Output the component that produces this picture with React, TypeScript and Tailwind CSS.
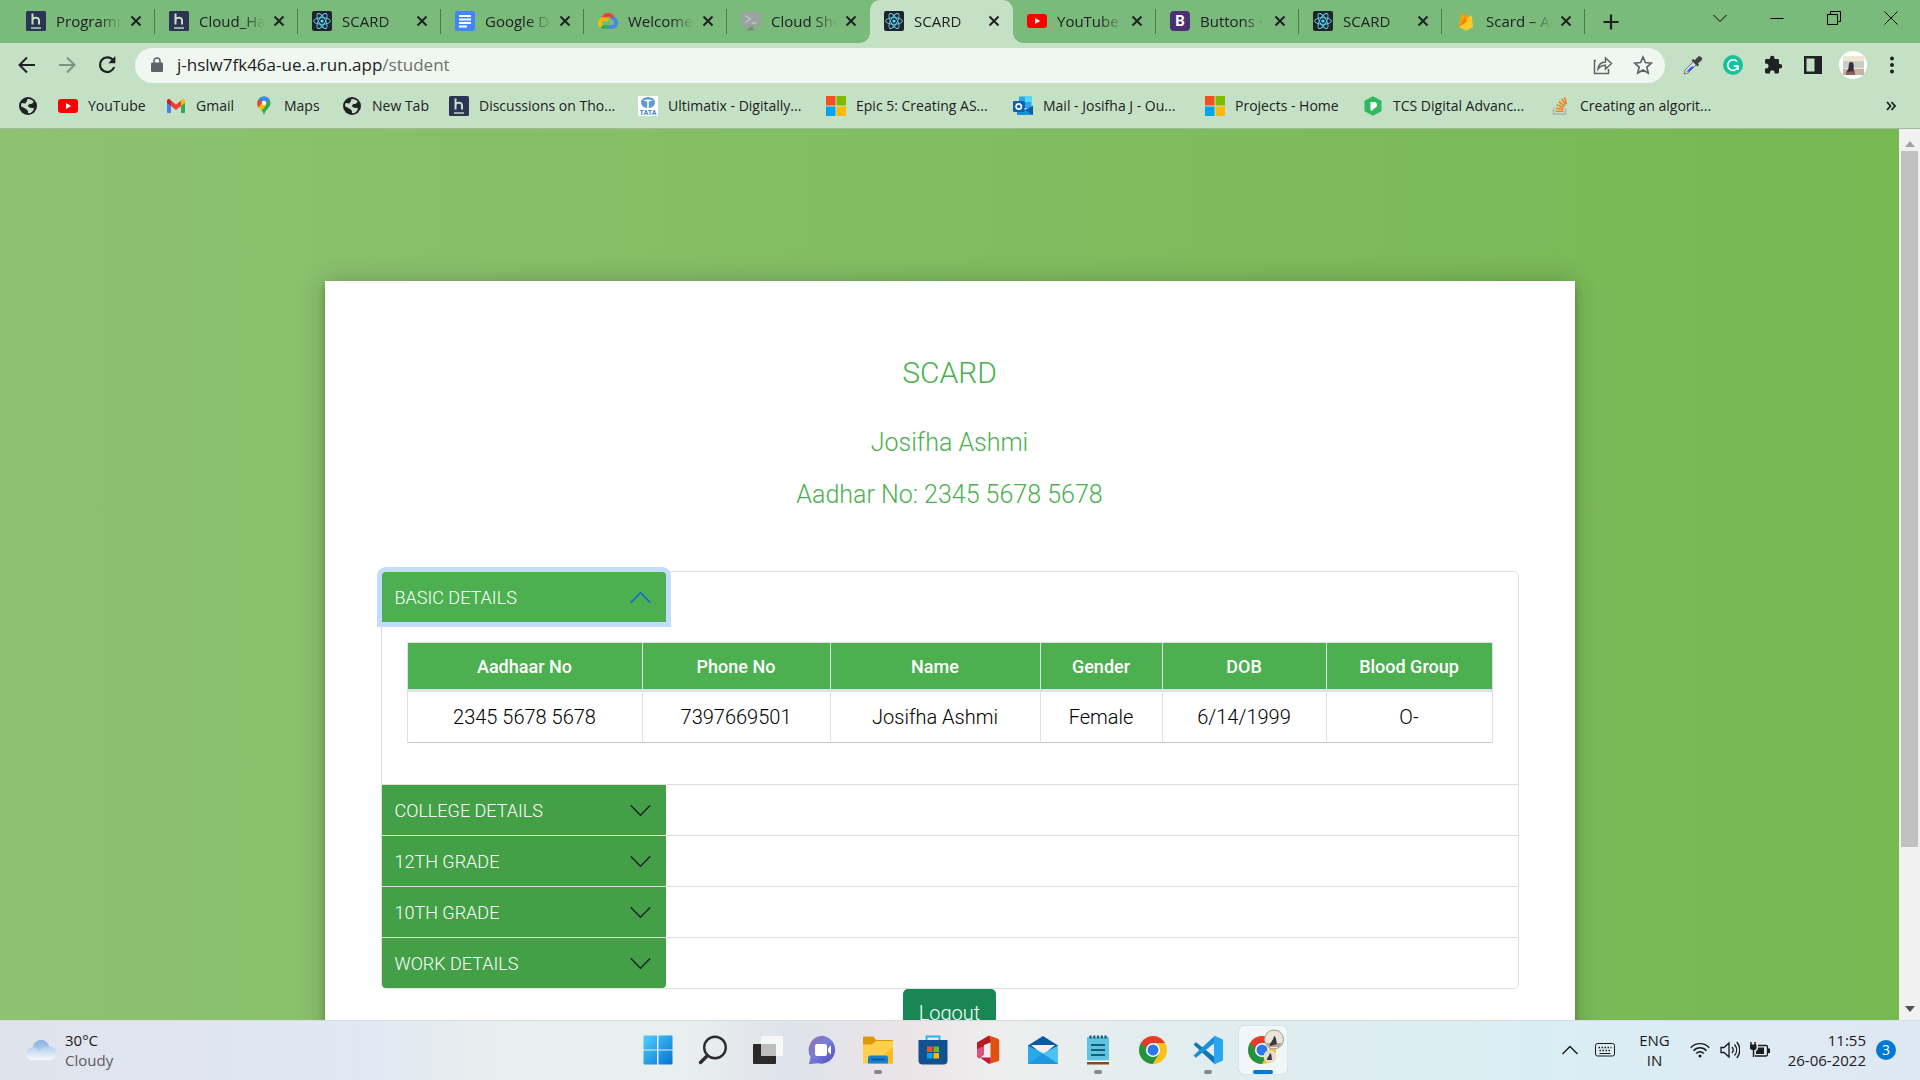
import { useState } from "react";
import type { ComponentType, ReactNode } from "react";

type IconType = ComponentType;

/* ---------- Favicons ---------- */

function HackerEarthIcon() {
  return (
    <svg viewBox="0 0 20 20" className="size-5">
      <rect width="20" height="20" rx="1.5" fill="#2c3454" />
      <path d="M6.5 2.5v11M6.5 8.6c.6-2 6.5-3 6.5.6v4.3" fill="none" stroke="#c5e1c5" strokeWidth="2" />
      <path d="M5 17h10" stroke="#c5e1c5" strokeWidth="1.4" />
    </svg>
  );
}

function ReactIcon() {
  return (
    <svg viewBox="0 0 20 20" className="size-5">
      <rect width="20" height="20" rx="2" fill="#20232a" />
      <g fill="none" stroke="#61dafb" strokeWidth="0.9">
        <ellipse cx="10" cy="10" rx="8.4" ry="3.3" />
        <ellipse cx="10" cy="10" rx="8.4" ry="3.3" transform="rotate(60 10 10)" />
        <ellipse cx="10" cy="10" rx="8.4" ry="3.3" transform="rotate(120 10 10)" />
      </g>
      <circle cx="10" cy="10" r="1.6" fill="#61dafb" />
    </svg>
  );
}

function DocsIcon() {
  return (
    <svg viewBox="0 0 20 20" className="size-5">
      <rect width="20" height="20" rx="2" fill="#4285f4" />
      <path d="M4 5h12M4 8.5h12M4 12h12M4 15.5h8" stroke="#fff" strokeWidth="1.8" />
    </svg>
  );
}

function GoogleCloudIcon() {
  return (
    <svg viewBox="0 0 20 20" className="size-5">
      <g fill="none" strokeWidth="3.6">
        <path d="M5 7.8C6 4.8 8.2 3.8 10.2 3.8c2.2 0 4.2 1.3 5 3.8" stroke="#ea4335" />
        <path d="M14.6 6.8c1.6 1 3.6 2.4 3.6 5 0 2.7-2 4.2-4.2 4.2h-4" stroke="#4285f4" />
        <path d="M10.2 16H5.6c-.8 0-1.6-.3-2.2-.8" stroke="#34a853" />
        <path d="M3.6 15.4c-2.4-2-2.2-6.4 1.6-7.3 2-.4 3.4.4 4.2 1.8" stroke="#fbbc05" />
      </g>
    </svg>
  );
}

function CloudShellIcon() {
  return (
    <svg viewBox="0 0 20 20" className="size-5">
      <rect y="1" width="20" height="14.5" rx="1" fill="#9aa39f" />
      <path d="M4.5 4.5l5 3.5-5 3.5M10.5 12h5" fill="none" stroke="#b9c6bd" strokeWidth="1.5" />
      <path d="M8 15.5h4V18h2v1.5H6V18h2z" fill="#7f8a85" />
    </svg>
  );
}

function YouTubeIcon() {
  return (
    <svg viewBox="0 0 20 20" className="size-5">
      <rect y="3" width="20" height="14" rx="3" fill="#f00" />
      <path d="M8 7l5.2 3L8 13z" fill="#fff" />
    </svg>
  );
}

function BootstrapIcon() {
  return (
    <svg viewBox="0 0 20 20" className="size-5">
      <rect width="20" height="20" rx="4" fill="#4c2f74" />
      <text x="10" y="15.4" textAnchor="middle" fontSize="15" fontWeight="700" fontFamily="Roboto, sans-serif" fill="#fff">
        B
      </text>
    </svg>
  );
}

function FirebaseIcon() {
  return (
    <svg viewBox="0 0 20 20" className="size-5">
      <path d="M3 16L5.4 1.6c.1-.5.7-.6.9-.2L9 6.2 10.2 4c.2-.4.7-.4.9 0L17 16z" fill="#ffa000" />
      <path d="M3 16L11 7.2 14.7 4.4c.4-.4.9-.1 1 .3L17 16l-6.2 3.3c-.5.3-1.1.3-1.6 0z" fill="#ffca28" />
      <path d="M3 16L9 6.2l2 4z" fill="#f57c00" />
    </svg>
  );
}

function GlobeIcon() {
  return (
    <svg viewBox="0 0 20 20" className="size-5">
      <circle cx="10" cy="10" r="9" fill="#202124" />
      <path d="M9.5 3c2-.5 4.8.6 6.2 2.6l-1.6 2.2-2.7.3-1.7 1.9 2.2 1.7 3.9.2c.4 1.7-1.4 4-3.2 5l-2.5.4-.3-2.7-2.5-2.2L3 10.2c0-1.3.2-2.2.7-3.2l3.7.6 1.3-2z" fill="#c5e1c5" />
    </svg>
  );
}

function GmailIcon() {
  return (
    <svg viewBox="0 0 20 20" className="size-5">
      <path d="M1 5.5V16c0 .6.4 1 1 1h3V8z" fill="#4285f4" />
      <path d="M19 5.5V16c0 .6-.4 1-1 1h-3V8z" fill="#34a853" />
      <path d="M5 4.5l5 4 5-4V10l-5 4-5-4z" fill="#ea4335" />
      <path d="M1 5c0-2 2-2.3 3-1.5l1 1V10L1 6.8z" fill="#c5221f" />
      <path d="M19 5c0-2-2-2.3-3-1.5l-1 1V10l4-3.2z" fill="#fbbc04" />
    </svg>
  );
}

function MapsIcon() {
  return (
    <svg viewBox="0 0 20 20" className="size-5">
      <path d="M10 .5C6 .5 3.5 3.6 3.5 7c0 5 5.3 6.2 6.5 12.5C11.2 13.2 16.5 12 16.5 7c0-3.4-2.5-6.5-6.5-6.5z" fill="#34a853" />
      <path d="M4.2 10.3l5-5.8L12 9.5l-4.6 5.2c-1.2-1.7-2.5-2.7-3.2-4.4z" fill="#fbbc04" />
      <path d="M5 3l4 3.3-5 5.5C3 9 3 5.5 5 3z" fill="#ea4335" />
      <path d="M5 3c2.2-3.2 8-3.4 10.3.3L10 9 7.5 5z" fill="#4285f4" />
      <circle cx="10" cy="7" r="2.3" fill="#fff" />
    </svg>
  );
}

function TataIcon() {
  return (
    <svg viewBox="0 0 20 20" className="size-5">
      <rect width="20" height="20" fill="#fff" />
      <ellipse cx="10" cy="6.5" rx="7" ry="5.5" fill="#5b9bd5" />
      <path d="M9.2 12V5.5L5 4.5c3-1.5 7-1.5 10 0l-4.2 1V12z" fill="#fff" />
      <text x="10" y="19" textAnchor="middle" fontSize="7" fontWeight="700" fontFamily="Roboto, sans-serif" fill="#3d85c6">
        TATA
      </text>
    </svg>
  );
}

function MicrosoftIcon() {
  return (
    <svg viewBox="0 0 20 20" className="size-5">
      <path d="M0 0h9.5v9.5H0z" fill="#f25022" />
      <path d="M10.5 0H20v9.5h-9.5z" fill="#7fba00" />
      <path d="M0 10.5h9.5V20H0z" fill="#00a4ef" />
      <path d="M10.5 10.5H20V20h-9.5z" fill="#ffb900" />
    </svg>
  );
}

function OutlookIcon() {
  return (
    <svg viewBox="0 0 20 20" className="size-5">
      <path d="M6 .5h12.5V12H6z" fill="#28a8ea" />
      <path d="M12 .5h6.5V6H12z" fill="#50d9ff" />
      <path d="M6 6h6v6H6z" fill="#0364b8" />
      <path d="M4 19V10l8 4 8-4.5V19z" fill="#1490df" />
      <path d="M20 10v9l-8-5z" fill="#0a5ea8" />
      <rect y="5" width="11.5" height="11" rx="1" fill="#0f5fb0" />
      <circle cx="5.7" cy="10.5" r="2.7" fill="none" stroke="#fff" strokeWidth="1.7" />
    </svg>
  );
}

function TcsIcon() {
  return (
    <svg viewBox="0 0 20 20" className="size-5">
      <path d="M10 .3l8.5 4.5v10.4L10 19.7l-8.5-4.5V4.8z" fill="#2dba5e" />
      <path d="M7.5 6h3.8c3.6 0 3.7 5.8 0 6.2l-2 2.3H7.5z" fill="#fff" />
    </svg>
  );
}

function StackOverflowIcon() {
  return (
    <svg viewBox="0 0 20 20" className="size-5">
      <path d="M3.5 12.5V18h12v-5.5" fill="none" stroke="#a9b3ad" strokeWidth="1.5" />
      <path
        d="M5.5 15.3h8M5.7 12.2l7.8 1.1M6.6 8.8l7.2 2.9M8.7 5.5l5.9 4.7M11.5 2.7l4.2 6M14.6 1.2l1.8 6.8"
        stroke="#f48024"
        strokeWidth="1.6"
      />
    </svg>
  );
}

/* ---------- Browser chrome ---------- */

const tabs: { title: string; icon: IconType; active?: boolean }[] = [
  { title: "Programming", icon: HackerEarthIcon },
  { title: "Cloud_Hack", icon: HackerEarthIcon },
  { title: "SCARD", icon: ReactIcon },
  { title: "Google Docs", icon: DocsIcon },
  { title: "Welcome to", icon: GoogleCloudIcon },
  { title: "Cloud Shell", icon: CloudShellIcon },
  { title: "SCARD", icon: ReactIcon, active: true },
  { title: "YouTube", icon: YouTubeIcon },
  { title: "Buttons · Bo", icon: BootstrapIcon },
  { title: "SCARD", icon: ReactIcon },
  { title: "Scard – Aut", icon: FirebaseIcon },
];

const bookmarks: { label: string; icon: IconType; width: string }[] = [
  { label: "YouTube", icon: YouTubeIcon, width: "w-[108px]" },
  { label: "Gmail", icon: GmailIcon, width: "w-[88px]" },
  { label: "Maps", icon: MapsIcon, width: "w-[88px]" },
  { label: "New Tab", icon: GlobeIcon, width: "w-[107px]" },
  { label: "Discussions on Tho...", icon: HackerEarthIcon, width: "w-[189px]" },
  { label: "Ultimatix - Digitally...", icon: TataIcon, width: "w-[188px]" },
  { label: "Epic 5: Creating AS...", icon: MicrosoftIcon, width: "w-[187px]" },
  { label: "Mail - Josifha J - Ou...", icon: OutlookIcon, width: "w-[192px]" },
  { label: "Projects - Home", icon: MicrosoftIcon, width: "w-[158px]" },
  { label: "TCS Digital Advanc...", icon: TcsIcon, width: "w-[187px]" },
  { label: "Creating an algorit...", icon: StackOverflowIcon, width: "w-[188px]" },
];

function Tab({ title, icon: Icon, active }: { title: string; icon: IconType; active?: boolean }) {
  return (
    <div
      className={`relative flex h-full w-[143px] min-w-0 items-center pb-0.5 pl-3.5 ${
        active ? "rounded-t-[10px] bg-[#c5e1c5]" : ""
      }`}
    >
      {active && (
        <>
          <span className="absolute bottom-0 -left-2.5 size-2.5 bg-[radial-gradient(circle_at_0_0,#7aba7b_9.5px,#c5e1c5_10px)]" />
          <span className="absolute bottom-0 -right-2.5 size-2.5 bg-[radial-gradient(circle_at_100%_0,#7aba7b_9.5px,#c5e1c5_10px)]" />
        </>
      )}
      <Icon />
      <span className="ml-2.5 w-[66px] overflow-hidden whitespace-nowrap text-[15px] leading-5 text-[#202124] mask-r-from-65%">
        {title}
      </span>
      <button aria-label="Close tab" className="ml-1 p-1">
        <svg viewBox="0 0 12 12" className="size-3">
          <path d="M1.5 1.5l9 9M10.5 1.5l-9 9" stroke="#202124" strokeWidth="2" />
        </svg>
      </button>
    </div>
  );
}

function WindowButton({ label, children }: { label: string; children: ReactNode }) {
  return (
    <button aria-label={label} className="flex w-[57px] items-center justify-center">
      <svg viewBox="0 0 16 16" className="size-4" fill="none" stroke="currentColor">
        {children}
      </svg>
    </button>
  );
}

function TabStrip() {
  return (
    <div className="flex h-[43px] items-center bg-[#7aba7b] pl-3">
      {tabs.map((tab, i) => (
        <div key={i} className="flex h-full items-center">
          <Tab {...tab} />
          {!tab.active && !tabs[i + 1]?.active && <span className="-ml-px h-[25px] w-px bg-[#4b7a50]" />}
        </div>
      ))}
      <button aria-label="New tab" className="ml-3.5 p-1">
        <svg viewBox="0 0 16 16" className="size-4">
          <path d="M8 .5v15M.5 8h15" stroke="#202124" strokeWidth="2.2" />
        </svg>
      </button>
      <div className="ml-auto flex h-full pr-px pb-2 text-black">
        <WindowButton label="Search tabs">
          <path d="M1.5 5l6.5 6.5L14.5 5" />
        </WindowButton>
        <WindowButton label="Minimize">
          <path d="M1.5 8.5h13" />
        </WindowButton>
        <WindowButton label="Restore">
          <path d="M1.5 4.5h10v10h-10zM4.5 4.5v-3h10v10h-3" />
        </WindowButton>
        <WindowButton label="Close">
          <path d="M1.5 1.5l13 13M14.5 1.5l-13 13" />
        </WindowButton>
      </div>
    </div>
  );
}

function Avatar() {
  return (
    <svg viewBox="0 0 28 28" className="size-7">
      <circle cx="14" cy="14" r="14" fill="#fff" />
      <rect x="4" y="5" width="21" height="19" fill="#efe6d4" />
      <path d="M4 10h21v7H4z" fill="#c9cfc2" />
      <path d="M4 18h21v6H4z" fill="#c4b2a3" />
      <path d="M12 11c3 0 3 3 2.5 6l1 6H7c-1-2 2-3 2.5-6s0-6 2.5-6z" fill="#34303c" />
      <path d="M7 21l9-1v4H7z" fill="#8a5f5c" />
    </svg>
  );
}

function Toolbar() {
  return (
    <div className="flex h-10 items-center pt-1 pl-[17px] pr-[15px]">
      <button aria-label="Back" className="mr-5 size-5">
        <svg viewBox="0 0 20 20" fill="none" stroke="#202124" strokeWidth="2">
          <path d="M18 10H3M10 2.5L2.5 10l7.5 7.5" />
        </svg>
      </button>
      <button aria-label="Forward" className="mr-5 size-5">
        <svg viewBox="0 0 20 20" fill="none" stroke="#7d957e" strokeWidth="2">
          <path d="M2 10h15M10 2.5l7.5 7.5-7.5 7.5" />
        </svg>
      </button>
      <button aria-label="Reload" className="size-5">
        <svg viewBox="0 0 20 20" fill="none" stroke="#202124" strokeWidth="2.2">
          <path d="M16 5.2A7.3 7.3 0 1 0 17.2 12" />
          <path d="M18.4 1v7.2h-7.2z" fill="#202124" stroke="none" />
        </svg>
      </button>
      <div className="ml-[18px] mr-3.5 flex h-[35px] flex-1 items-center rounded-full bg-[#f0f7f0] pl-4 pr-3">
        <svg viewBox="0 0 12 16" className="h-4 w-3">
          <rect y="5.5" width="12" height="9.5" rx="1.2" fill="#5f6368" />
          <path d="M3 6V4a3 3 0 0 1 6 0v2" fill="none" stroke="#5f6368" strokeWidth="1.5" />
        </svg>
        <label className="ml-3.5 flex h-full flex-1 items-center text-[17px] text-[#202124]">
          j-hslw7fk46a-ue.a.run.app
          <input
            readOnly
            value="/student"
            className="min-w-0 flex-1 bg-transparent text-[#6b716e] outline-none"
          />
        </label>
        <button aria-label="Share" className="mr-5 size-5">
          <svg viewBox="0 0 20 20" fill="none" stroke="#5f6368" strokeWidth="1.5">
            <path d="M3 5.5H1.5v13h14V14" />
            <path d="M5 14c.5-4.5 3-6.8 7.5-7V3l6 5.5-6 5.5v-3.8C9 10.2 7 11.2 5 14z" />
          </svg>
        </button>
        <button aria-label="Bookmark this page" className="size-5">
          <svg viewBox="0 0 20 20" fill="none" stroke="#5f6368" strokeWidth="1.7">
            <path d="M10 2l2.4 5.5 6 .6-4.5 4 1.3 5.9-5.2-3.1L4.8 18l1.3-5.9-4.5-4 6-.6z" />
          </svg>
        </button>
      </div>
      <div className="flex items-center">
        <button aria-label="Color picker" className="flex w-10 justify-center pr-3">
          <svg viewBox="0 0 20 20" className="size-5">
            <path d="M1 19l1-4 8.5-8.5 3 3L5 18z" fill="#cfe0f5" stroke="#777" />
            <path d="M3.5 16.5l5-5 3 .2-5.5 5z" fill="#3559e0" />
            <path d="M8.5 5.5l6 6 1.5-1.5-1-1.5 3.8-3.3c1.5-2-1.8-5-3.8-3.5L12 5l-1.8-1z" fill="#444" />
          </svg>
        </button>
        <button aria-label="Grammarly" className="flex w-10 justify-center pr-3">
          <svg viewBox="0 0 20 20" className="size-5">
            <circle cx="10" cy="10" r="10" fill="#15c39a" />
            <path d="M14 6.5A5.3 5.3 0 1 0 15 12M10.8 11.2H15V15" fill="none" stroke="#fff" strokeWidth="1.7" />
          </svg>
        </button>
        <button aria-label="Extensions" className="flex w-10 justify-center pr-3">
          <svg viewBox="0 0 20 20" className="size-5">
            <path d="M17 9h-1V5.5C16 4.5 15.5 4 14.5 4H11.5V3a2.2 2.2 0 0 0-4.5 0v1H3.5C2.5 4 2 4.5 2 5.5v3h1a2.5 2.5 0 0 1 0 5H2v3.500c0 .8.5 1.5 1.5 1.5H7v-1a2.3 2.3 0 0 1 4.6 0v1h3c.9 0 1.4-.7 1.4-1.5v-3.5h1A2.2 2.2 0 0 0 17 9z" fill="#202124" />
          </svg>
        </button>
        <button aria-label="Side panel" className="flex w-10 justify-center pr-3">
          <svg viewBox="0 0 20 20" className="size-5">
            <path d="M1 1h18v18H1zM3.5 3.5v13h8v-13z" fill="#202124" fillRule="evenodd" />
          </svg>
        </button>
        <button aria-label="Profile" className="flex w-10 justify-center pr-3">
          <Avatar />
        </button>
        <button aria-label="Menu" className="flex w-[26px] justify-center">
          <svg viewBox="0 0 20 20" className="size-5" fill="#202124">
            <circle cx="10" cy="3.5" r="2" />
            <circle cx="10" cy="10" r="2" />
            <circle cx="10" cy="16.5" r="2" />
          </svg>
        </button>
      </div>
    </div>
  );
}

function BookmarksBar() {
  return (
    <nav className="flex h-[46px] items-center border-b border-[#a3b8a3] pl-[18px] pr-6 text-[14px] text-[#202124]">
      <a href="#" aria-label="Apps" className="mr-5">
        <GlobeIcon />
      </a>
      {bookmarks.map(({ label, icon: Icon, width }, i) => (
        <a key={i} href="#" className={`flex shrink-0 items-center gap-2.5 whitespace-nowrap ${width}`}>
          <Icon />
          {label}
        </a>
      ))}
      <button aria-label="More bookmarks" className="ml-auto">
        <svg viewBox="0 0 10 10" className="size-2.5" fill="none" stroke="#202124" strokeWidth="1.8">
          <path d="M1 1l3.5 4L1 9M5.5 1L9 5 5.5 9" />
        </svg>
      </button>
    </nav>
  );
}

/* ---------- Student page ---------- */

const details = [
  { label: "Aadhaar No", value: "2345 5678 5678", width: "w-[235px]" },
  { label: "Phone No", value: "7397669501", width: "w-[188px]" },
  { label: "Name", value: "Josifha Ashmi", width: "w-[210px]" },
  { label: "Gender", value: "Female", width: "w-[122px]" },
  { label: "DOB", value: "6/14/1999", width: "w-[164px]" },
  { label: "Blood Group", value: "O-", width: "w-[166px]" },
];

const sections = ["BASIC DETAILS", "COLLEGE DETAILS", "12TH GRADE", "10TH GRADE", "WORK DETAILS"];

function DetailsTable() {
  return (
    <table className="w-full table-fixed border-collapse border border-[#dee2e6] text-center">
      <thead>
        <tr className="h-12 border-b-3 border-[#dee2e6] bg-[#4caf50] text-[18px] text-white">
          {details.map((item) => (
            <th key={item.label} className={`border-x border-[#dee2e6] font-medium ${item.width}`}>
              {item.label}
            </th>
          ))}
        </tr>
      </thead>
      <tbody>
        <tr className="h-[52px] border-b border-[#bccfc8] text-[20px] text-black">
          {details.map((item) => (
            <td key={item.label} className="border-x border-[#dee2e6]">
              {item.value}
            </td>
          ))}
        </tr>
      </tbody>
    </table>
  );
}

function Accordion() {
  const [open, setOpen] = useState<number | null>(0);

  return (
    <div className="divide-y divide-[#dfdfdf] rounded-[5px] border border-[#dfdfdf]">
      {sections.map((section, i) => {
        const isOpen = open === i;
        return (
          <div key={section}>
            <button
              onClick={() => setOpen(isOpen ? null : i)}
              aria-expanded={isOpen}
              className={`flex h-[50px] w-1/4 items-center justify-between px-[13px] text-[18px] text-white ${
                isOpen ? "bg-[#4caf50] shadow-[0_0_0_5px_#c3dbfe]" : "bg-[#43a047]"
              } ${i === 0 ? "rounded-t-[4px]" : ""} ${i === sections.length - 1 ? "rounded-b-[4px]" : ""}`}
            >
              {section}
              <svg
                viewBox="0 0 16 16"
                className={`size-[25px] ${isOpen ? "rotate-180 text-[#0c63e4]" : "text-[#212529]"}`}
                fill="none"
                stroke="currentColor"
                strokeLinecap="round"
              >
                <path d="M2 5l6 6 6-6" />
              </svg>
            </button>
            {isOpen && (
              <div className="px-[25px] pt-5 pb-[41px]">
                <DetailsTable />
              </div>
            )}
          </div>
        );
      })}
    </div>
  );
}

function StudentPage() {
  return (
    <main className="min-w-0 flex-1 overflow-hidden bg-linear-to-l from-[#76b852] to-[#8dc26f] pt-38 font-[Roboto,sans-serif] font-light">
      <div className="mx-auto max-w-[1250px] bg-white px-14 pt-[73px] pb-14 text-center shadow-[0_0_25px_rgba(0,0,0,0.2),0_6px_6px_rgba(0,0,0,0.24)]">
        <h1 className="text-[30px] leading-[38px] text-[#4caf50]">SCARD</h1>
        <h2 className="mt-[33px] text-[25px] leading-[36px] text-[#4caf50]">Josifha Ashmi</h2>
        <h2 className="mt-4 mb-[58px] text-[25px] leading-[36px] text-[#4caf50]">Aadhar No: 2345 5678 5678</h2>
        <Accordion />
        <button className="h-[47px] rounded-[5px] bg-[#198754] px-4 text-[20px] text-white">Logout</button>
      </div>
    </main>
  );
}

function Scrollbar() {
  return (
    <div className="flex w-[21px] flex-col items-center bg-[#f1f1f1] py-2">
      <svg viewBox="0 0 10 6" className="my-1 h-1.5 w-2.5">
        <path d="M5 0l5 6H0z" fill="#a3a3a3" />
      </svg>
      <div className="h-[696px] w-[17px] bg-[#c1c1c1]" />
      <svg viewBox="0 0 10 6" className="mt-auto h-1.5 w-2.5">
        <path d="M0 0h10L5 6z" fill="#505050" />
      </svg>
    </div>
  );
}

/* ---------- Taskbar ---------- */

function StartIcon() {
  return (
    <svg viewBox="0 0 30 30" className="size-[30px]">
      <defs>
        <linearGradient id="start" x1="0" y1="0" x2="1" y2="1">
          <stop offset="0" stopColor="#4fd0fb" />
          <stop offset="1" stopColor="#0474d4" />
        </linearGradient>
      </defs>
      <path d="M1.5.5H14v14H.5v-13a1 1 0 0 1 1-1zM15.5.5h13a1 1 0 0 1 1 1v13h-14zM.5 15.5H14v14H1.5a1 1 0 0 1-1-1zM15.5 15.5h14v13a1 1 0 0 1-1 1h-13z" fill="url(#start)" />
    </svg>
  );
}

function SearchIcon() {
  return (
    <svg viewBox="0 0 30 30" className="size-[30px]" fill="none" stroke="#2d2d2d">
      <circle cx="17" cy="12.5" r="10.8" strokeWidth="2.4" />
      <path d="M9.5 20.5l-7 7" strokeWidth="3.4" strokeLinecap="round" />
    </svg>
  );
}

function TaskViewIcon() {
  return (
    <svg viewBox="0 0 30 30" className="size-[30px]">
      <rect x="0" y="9" width="23" height="20" rx="1" fill="#2b2a29" />
      <rect x="8" y="1" width="22" height="20" rx="1" fill="#f8f8f8" fillOpacity="0.9" />
      <path d="M8 9h15v12H8z" fill="#bebebe" />
    </svg>
  );
}

function ChatIcon() {
  return (
    <svg viewBox="0 0 30 30" className="size-[30px]">
      <defs>
        <linearGradient id="chat" x1="0" y1="0" x2="1" y2="1">
          <stop offset="0" stopColor="#9a6cae" />
          <stop offset="0.45" stopColor="#7a7fd8" />
          <stop offset="1" stopColor="#4c4bbd" />
        </linearGradient>
      </defs>
      <path d="M15 .8A14 14 0 1 1 9.5 28.2L.8 29.2 2.5 22A14.2 14.2 0 0 1 15 .8z" fill="url(#chat)" />
      <rect x="7" y="9" width="12" height="12" rx="2" fill="#fff" />
      <path d="M20 13.5l3-3.2v9.5l-3-3.3z" fill="#fff" />
    </svg>
  );
}

function ExplorerIcon() {
  return (
    <svg viewBox="0 0 30 30" className="size-[30px]">
      <path d="M0 3c0-.8.6-1.5 1.5-1.5h9L13 5h17v5H0z" fill="#dc9a0a" />
      <path d="M0 9.5h9L13 6h17v22.5H0z" fill="#ffd04c" />
      <path d="M30 12v16.5H12z" fill="#fcbd1c" />
      <path d="M5 28.5V23c0-1.5 1-2.5 2.5-2.5h15c1.5 0 2.5 1 2.5 2.5v5.5z" fill="#1680cf" />
      <path d="M9 24.5h12" stroke="#0a4e90" strokeWidth="1.5" strokeLinecap="round" />
    </svg>
  );
}

function StoreIcon() {
  return (
    <svg viewBox="0 0 30 30" className="size-[30px]">
      <path d="M8.5 6V1.5h13V6" fill="none" stroke="#21b4f3" strokeWidth="1.8" />
      <path d="M.5 5h29v20.5a4 4 0 0 1-4 4h-21a4 4 0 0 1-4-4z" fill="#125190" />
      <path d="M9 11.5h5.5V17H9z" fill="#f25022" />
      <path d="M15.5 11.5H21V17h-5.5z" fill="#7fba00" />
      <path d="M9 18h5.5v5.5H9z" fill="#00a4ef" />
      <path d="M15.5 18H21v5.5h-5.5z" fill="#ffb900" />
    </svg>
  );
}

function OfficeIcon() {
  return (
    <svg viewBox="0 0 30 30" className="size-[30px]">
      <path d="M4 7.5L16 .5l4 6-9 3.5v9.5l-5 4-2-2z" fill="#b51a22" />
      <path d="M4 14l7-3v8.5l-5.5 4L4 21z" fill="#d9537c" />
      <path d="M16 .5l9 3.2c.8.3 1.2 1 1.2 2v18.8c0 1-.4 1.5-1.2 1.8L16 29l1.5-5V6z" fill="#e2500f" />
      <path d="M7 22.5h10.5V27L16 29z" fill="#c8143b" />
    </svg>
  );
}

function MailIcon() {
  return (
    <svg viewBox="0 0 30 30" className="size-[30px]">
      <path d="M0 10.5L15 1l15 9.5V20H0z" fill="#0b57a5" />
      <path d="M3 10h24L15 20z" fill="#f1efee" />
      <path d="M0 10.5L30 26v3H0z" fill="#28a9ea" />
      <path d="M30 10.5V28.5L15 18.5z" fill="#4cc3f5" />
      <path d="M15 19l15 10H0z" fill="#1e97e0" />
    </svg>
  );
}

function NotepadIcon() {
  return (
    <svg viewBox="0 0 30 30" className="size-[30px]">
      <path d="M4 27h22v2.5H4z" fill="#8f4a14" />
      <path d="M4 25h22v2H4z" fill="#fff" />
      <path d="M4 2h22v23.5H4z" fill="#5fc3df" />
      <path d="M8 10h14M8 15h14M8 20h14" stroke="#12607e" strokeWidth="2" />
      <path d="M7.5.5v3M11.3.5v3M15 .5v3M18.8.5v3M22.5.5v3" stroke="#135c74" strokeWidth="2.2" />
    </svg>
  );
}

function ChromeLogo() {
  return (
    <>
      <circle cx="15" cy="15" r="14" fill="#fbc116" />
      <path d="M15 15L2.9 8A14 14 0 0 1 27.1 8H15z" fill="#e33b2e" />
      <path d="M2.9 8A14 14 0 0 0 14.8 29l6.3-10.5L15 15 8.9 18.5z" fill="#229342" />
      <path d="M2.9 8L9 18.5 15 8z" fill="#e33b2e" />
      <path d="M2.9 8l6 10.5 3-3.5z" fill="#229342" />
      <circle cx="15" cy="15" r="7" fill="#fff" />
      <circle cx="15" cy="15" r="5.5" fill="#2c78e8" />
    </>
  );
}

function ChromeIcon() {
  return (
    <svg viewBox="0 0 30 30" className="size-[30px]">
      <ChromeLogo />
    </svg>
  );
}

function VsCodeIcon() {
  return (
    <svg viewBox="0 0 30 30" className="size-[30px]">
      <path d="M21.5 22L3 7.200.5 9.500 21.5 29z" fill="#0b77b9" />
      <path d="M21.5 8L3 22.8.5 20.5 21.5 1z" fill="#1a8fd6" />
      <path d="M21 .5l8 3.5c.6.3 1 .8 1 1.5v19c0 .7-.4 1.2-1 1.5l-8 3.5z" fill="#2aa5f2" />
    </svg>
  );
}

function ChromeProfileIcon() {
  return (
    <svg viewBox="0 0 42 42" className="size-[42px]">
      <g transform="translate(5 6)">
        <ChromeLogo />
      </g>
      <circle cx="32" cy="10.5" r="9.5" fill="#e8e4da" stroke="#9b9b9b" />
      <path d="M24 14h16l-3 4h-10z" fill="#b5a290" />
      <path d="M32 7c2.5 1 2 4 3 8l-7 2c-1-3 3-4 4-10z" fill="#3a3540" />
      <circle cx="28" cy="27.5" r="6.5" fill="#e5dccb" />
      <path d="M28 24c2 1 1.5 4 2 7h-5c0-3 2-3 3-7z" fill="#3a3540" />
    </svg>
  );
}

const apps: { name: string; icon: IconType; running?: boolean; active?: boolean }[] = [
  { name: "Start", icon: StartIcon },
  { name: "Search", icon: SearchIcon },
  { name: "Task view", icon: TaskViewIcon },
  { name: "Chat", icon: ChatIcon },
  { name: "File Explorer", icon: ExplorerIcon, running: true },
  { name: "Microsoft Store", icon: StoreIcon },
  { name: "Office", icon: OfficeIcon },
  { name: "Mail", icon: MailIcon },
  { name: "Notepad", icon: NotepadIcon, running: true },
  { name: "Google Chrome", icon: ChromeIcon },
  { name: "Visual Studio Code", icon: VsCodeIcon, running: true },
  { name: "Google Chrome profile", icon: ChromeProfileIcon, active: true },
];

function Taskbar() {
  return (
    <footer className="grid h-15 shrink-0 grid-cols-[1fr_auto_1fr] items-center border-t border-[#d8dcdf] bg-[linear-gradient(90deg,#dfe3ec_0%,#dfe8f3_18%,#e9f0ef_27%,#e9eeee_36%,#dfe3eb_41%,#ece5e7_48%,#eeeeee_52%,#e2edef_60%,#d9eef3_80%,#dfe9f4_96%,#dce8f3_100%)] pb-0.5 text-[15px] leading-5 text-[#1b1b1b]">
      <div className="flex items-center gap-2 pl-[25px]">
        <svg viewBox="0 0 32 20" className="h-5 w-8">
          <defs>
            <linearGradient id="cloud-back" x1="0" y1="0" x2="0" y2="1">
              <stop offset="0" stopColor="#86b0e2" />
              <stop offset="1" stopColor="#cfe0f3" />
            </linearGradient>
            <linearGradient id="cloud-front" x1="0" y1="0" x2="0" y2="1">
              <stop offset="0" stopColor="#b3cdec" />
              <stop offset="1" stopColor="#f6fafd" />
            </linearGradient>
          </defs>
          <circle cx="16" cy="8.5" r="8.5" fill="url(#cloud-back)" />
          <path d="M7.5 7.5c4 0 6 2 7.5 4.5 1.5-3 4-5.5 8-5.5 5 0 8.5 2.5 8.5 6.5s-3 7-7 7H7c-4 0-6.5-3-6.5-6.5s3-6 7-6z" fill="url(#cloud-front)" />
        </svg>
        <div>
          <div>30°C</div>
          <div className="text-[#5a5d61]">Cloudy</div>
        </div>
      </div>
      <div className="flex gap-[7px]">
        {apps.map(({ name, icon: Icon, running, active }) => (
          <button
            key={name}
            aria-label={name}
            className={`relative flex size-12 items-center justify-center rounded-[5px] ${
              active ? "bg-[#f1f7f8] shadow-[0_0_1px_rgba(0,0,0,0.3)]" : ""
            }`}
          >
            <Icon />
            {running && <span className="absolute bottom-0 h-1 w-2 rounded-full bg-[#858789]" />}
            {active && <span className="absolute bottom-0 h-1 w-5 rounded-full bg-[#0078d4]" />}
          </button>
        ))}
      </div>
      <div className="flex items-center justify-end pr-6">
        <button aria-label="Show hidden icons" className="mr-4">
          <svg viewBox="0 0 18 18" className="size-[18px]" fill="none" stroke="#1b1b1b" strokeWidth="1.4">
            <path d="M1.5 13L9 5.5l7.5 7.5" />
          </svg>
        </button>
        <svg viewBox="0 0 20 14" className="mr-6 h-3.5 w-5" fill="none" stroke="#1b1b1b">
          <rect x="0.5" y="0.5" width="19" height="12.5" rx="2" />
          <path d="M3.5 4.5h13M4.5 7.5h12" strokeDasharray="1.5 1.5" strokeWidth="1.4" />
          <path d="M4.5 10.5h11" />
        </svg>
        <div className="mr-5 text-center">
          <div>ENG</div>
          <div>IN</div>
        </div>
        <button aria-label="Network, volume and battery" className="mr-[18px] flex items-center gap-2.5">
          <svg viewBox="0 0 20 16" className="h-4 w-5" fill="none" stroke="#1b1b1b" strokeWidth="1.4">
            <path d="M.7 5.8c5-5.6 13.6-5.6 18.6 0M3.5 8.7c3.6-4 9.4-4 13 0M6.2 11.5c2.2-2.4 5.4-2.4 7.6 0" />
            <circle cx="10" cy="14" r="1.5" fill="#1b1b1b" stroke="none" />
          </svg>
          <svg viewBox="0 0 20 18" className="h-[18px] w-5" fill="none" stroke="#1b1b1b" strokeWidth="1.3">
            <path d="M1 6.5v5h3l5 4.5V2L4 6.5zM12 6c1.5 1.8 1.5 4.2 0 6M14.5 3.5c2.8 3.3 2.8 7.7 0 11M16.8 1c4 4.8 4 11.2 0 16" />
          </svg>
          <svg viewBox="0 0 20 16" className="h-4 w-5">
            <path d="M1 0v3M5 0v3" stroke="#1b1b1b" strokeWidth="1.4" />
            <path d="M0 2.5h6.5V6c0 1-1 2-2.2 2v7H2.8V8C1 8 0 7 0 6z" fill="#1b1b1b" />
            <path d="M8 3.5h8a1.5 1.5 0 0 1 1.5 1.5v7.5A1.5 1.5 0 0 1 16 14H5" fill="none" stroke="#1b1b1b" strokeWidth="1.3" />
            <path d="M8 5.5h6v6.5H6V9.5L8 7z" fill="#1b1b1b" />
            <path d="M18 6.5h2v4.5h-2z" fill="#1b1b1b" />
          </svg>
        </button>
        <div className="mr-2.5 text-right">
          <div>11:55</div>
          <div>26-06-2022</div>
        </div>
        <span className="flex size-5 items-center justify-center rounded-full bg-[#0078d4] text-[14px] text-white">3</span>
      </div>
    </footer>
  );
}

function App() {
  return (
    <div className="flex h-screen flex-col overflow-hidden font-['Open_Sans','Noto_Sans',sans-serif]">
      <header className="shrink-0 bg-[#c5e1c5]">
        <TabStrip />
        <Toolbar />
        <BookmarksBar />
      </header>
      <div className="flex min-h-0 flex-1">
        <StudentPage />
        <Scrollbar />
      </div>
      <Taskbar />
    </div>
  );
}

export default App;
